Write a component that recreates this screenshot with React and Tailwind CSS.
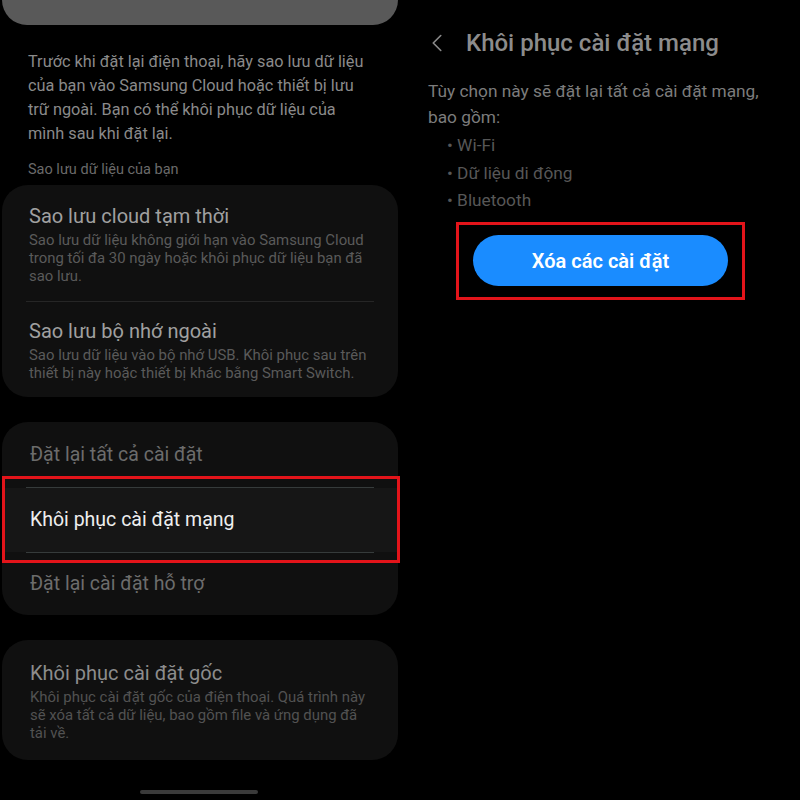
import { ChevronLeft } from 'lucide-react'

const FONT = { fontFamily: 'Roboto, "Noto Sans", sans-serif' }

function Card({ children, className = '' }) {
  return <div className={`mx-[2px] rounded-[26px] bg-[#101010] ${className}`}>{children}</div>
}

function LeftPane() {
  return (
    <div className="w-[400px] flex flex-col">
      <div className="h-[25px] mx-[2px] rounded-b-[28px] bg-[#595959]" />

      <p className="mt-[25px] px-[28px] text-[16.3px] leading-[24px] text-[#8a8a8a]">
        Trước khi đặt lại điện thoại, hãy sao lưu dữ liệu<br />
        của bạn vào Samsung Cloud hoặc thiết bị lưu<br />
        trữ ngoài. Bạn có thể khôi phục dữ liệu của<br />
        mình sau khi đặt lại.
      </p>
      <p className="mt-[14px] px-[28px] text-[14.5px] leading-[20px] text-[#6a6a6a]">Sao lưu dữ liệu của bạn</p>

      <Card className="mt-[5px] pt-[18px] pb-[15px]">
        <div className="px-[27px]">
          <div className="text-[20px] leading-[26px] text-[#a0a0a0]">Sao lưu cloud tạm thời</div>
          <div className="mt-[2px] text-[14.9px] leading-[18px] text-[#5a5a5a]">
            Sao lưu dữ liệu không giới hạn vào Samsung Cloud<br />
            trong tối đa 30 ngày hoặc khôi phục dữ liệu bạn đã<br />
            sao lưu.
          </div>
        </div>
        <div className="mx-[24px] mt-[16px] h-px bg-[#262626]" />
        <div className="px-[27px] mt-[16px]">
          <div className="text-[20px] leading-[26px] text-[#a0a0a0]">Sao lưu bộ nhớ ngoài</div>
          <div className="mt-[2px] text-[14.9px] leading-[18px] text-[#5a5a5a]">
            Sao lưu dữ liệu vào bộ nhớ USB. Khôi phục sau trên<br />
            thiết bị này hoặc thiết bị khác bằng Smart Switch.
          </div>
        </div>
      </Card>

      <div className="relative mt-[25px]">
        <Card>
          <div className="h-[65px] flex items-center px-[28px] text-[19.5px] text-[#6c6c6c]">Đặt lại tất cả cài đặt</div>
          <div className="mx-[24px] h-px bg-[#363b3b]" />
          <div className="h-[64px] flex items-center px-[28px] text-[19.5px] text-[#eeeeee] bg-[#161616]">Khôi phục cài đặt mạng</div>
          <div className="mx-[24px] h-px bg-[#363b3b]" />
          <div className="h-[62px] flex items-center px-[28px] text-[19.5px] text-[#6c6c6c]">Đặt lại cài đặt hỗ trợ</div>
        </Card>
        <div className="absolute left-[2px] top-[54px] w-[398px] h-[87px] border-[3px] border-[#e3141a]" />
      </div>

      <Card className="mt-[25px] pt-[20px] pb-[18px] px-[28px]">
        <div className="text-[20px] leading-[26px] text-[#8c8c8c]">Khôi phục cài đặt gốc</div>
        <div className="mt-[2px] text-[14.9px] leading-[18px] text-[#525252]">
          Khôi phục cài đặt gốc của điện thoại. Quá trình này<br />
          sẽ xóa tất cả dữ liệu, bao gồm file và ứng dụng đã<br />
          tải về.
        </div>
      </Card>

      <div className="mt-[30px] ml-[140px] w-[118px] h-[4px] rounded-full bg-[#3a3a3a]" />
    </div>
  )
}

function RightPane() {
  return (
    <div className="flex-1 flex flex-col pl-[28px]">
      <div className="mt-[28px] flex items-center h-[30px]">
        <ChevronLeft className="ml-[-6px] w-[30px] h-[30px] text-[#8a8a8a]" strokeWidth={1.3} />
        <span className="ml-[14px] text-[24px] font-medium text-[#8c8c8c]">Khôi phục cài đặt mạng</span>
      </div>
      <p className="mt-[20px] text-[17.3px] leading-[26px] text-[#7c7c7c]">
        Tùy chọn này sẽ đặt lại tất cả cài đặt mạng,<br />
        bao gồm:
      </p>
      <ul className="mt-[2px] pl-[19px] text-[17.3px] leading-[27.5px] text-[#575757]">
        <li>• Wi-Fi</li>
        <li>• Dữ liệu di động</li>
        <li>• Bluetooth</li>
      </ul>
      <div className="mt-[7px] ml-[28px] w-[289px] h-[78px] border-[3px] border-[#e3141a] flex items-center justify-center">
        <button className="w-[255px] h-[51px] rounded-full bg-[#1a8cff] text-white text-[20px] font-semibold">
          Xóa các cài đặt
        </button>
      </div>
    </div>
  )
}

export default function App() {
  return (
    <div className="w-[800px] h-[800px] bg-black flex overflow-hidden" style={FONT}>
      <LeftPane />
      <RightPane />
    </div>
  )
}
